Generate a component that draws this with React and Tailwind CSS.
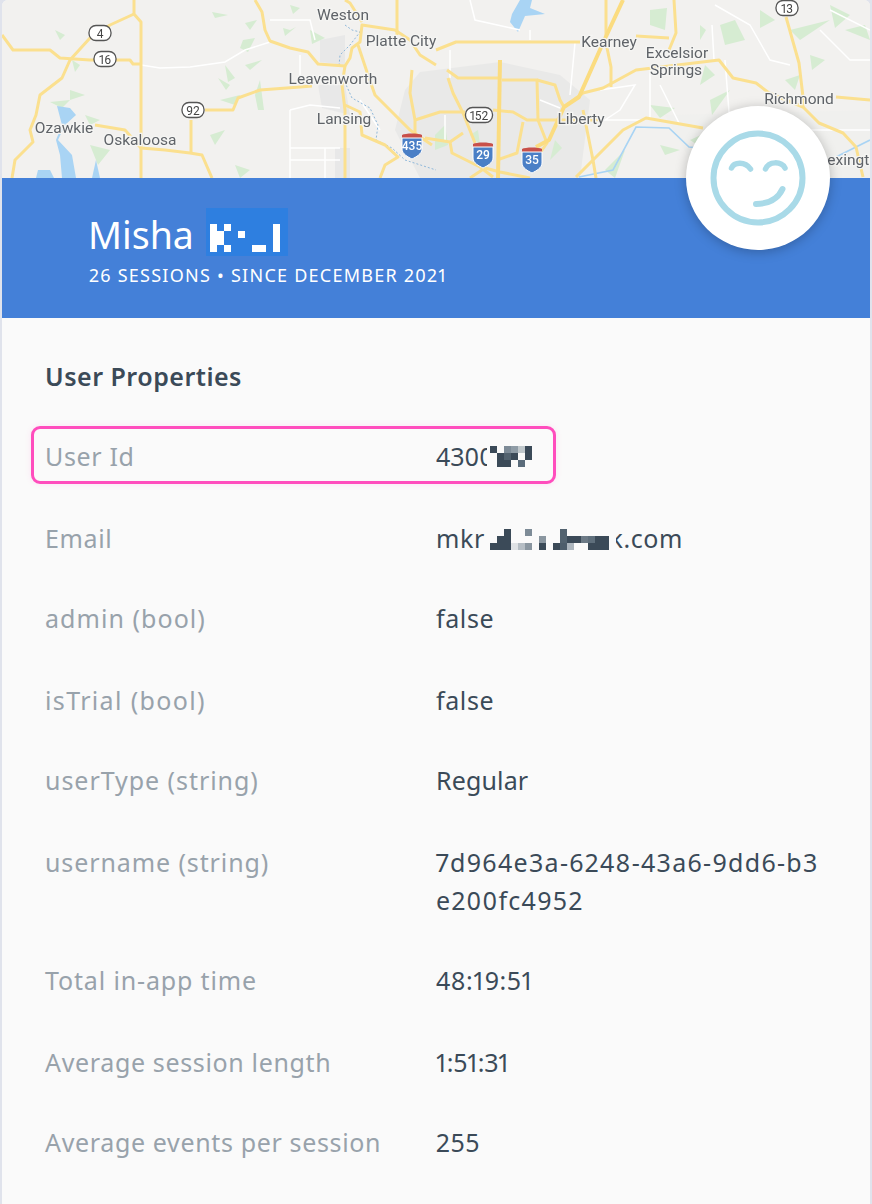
const yellow = [
  "134,0 134,14 141,22 141,180",
  "134,14 110,25 90,38 70,60 62,78 40,95 36,115 30,130 33,142 15,160 12,178",
  "2,35 13,50 50,50 60,58 90,60 130,60 133,64 141,64",
  "95,125 125,130 141,148 165,150 190,153 202,155 212,178",
  "205,110 233,110 238,98 260,90 300,87 312,86",
  "191,120 191,153",
  "255,0 262,12 265,30 270,41 290,48 308,52 318,64 345,66 350,58 352,48 360,42 362,25 395,30 410,40 420,55 436,65",
  "345,0 350,3 362,22",
  "397,0 397,35",
  "358,45 368,75 375,95 395,115 410,130 432,145",
  "345,66 342,85 345,110 345,178",
  "345,105 360,112 362,135 385,145 398,157 385,165 380,178",
  "412,70 410,93 415,120 415,133",
  "415,120 440,112 465,112",
  "493,110 513,112 527,120 567,120 600,120",
  "502,80 537,80 538,120 547,143 540,153 535,165",
  "447,70 458,78 498,78",
  "448,78 453,93 463,113 475,143",
  "425,138 450,142 463,133",
  "450,142 452,153 480,167 493,177",
  "523,122 517,153 497,160",
  "537,80 555,85 560,100 564,107",
  "436,50 456,42 580,42",
  "636,36 669,38",
  "674,0 676,33 669,50",
  "606,0 606,43 611,67 611,87",
  "564,107 583,93 603,88 636,70 719,60 733,78 756,83 769,93 803,107 819,123 843,133 856,147 863,177",
  "836,97 870,100",
  "786,17 799,63 803,97 803,107",
  "576,177 603,150 623,130 646,118 703,128",
  "583,110 593,160 596,178",
  "470,178 485,168 500,172 530,178",
];
const yellowThick = ["623,0 603,43 579,97 564,107 549,140 536,147", "500,60 498,178"];
const white = [
  "141,65 160,68 190,67 225,62 245,50 270,42",
  "270,20 310,20 315,40", "300,55 300,85", "290,110 310,105 340,108", "290,110 290,178",
  "290,148 340,148", "290,160 340,160", "325,148 325,178", "520,30 475,20 470,0",
  "540,100 560,108", "600,90 635,85 620,110 605,120 640,120", "660,85 680,125", "650,70 650,120",
  "715,5 750,25 770,60 790,65", "712,25 714,60", "725,60 730,125", "830,10 870,30", "820,30 850,60 870,60", "810,130 870,130",
  "530,30 530,40", "450,50 450,78", "575,43 570,95", "380,130 360,100", "445,140 445,115",
];
const greens = [
  "212,12 228,15 215,18", "245,23 257,20 250,30", "290,30 296,27 285,36 283,28", "243,40 255,38 248,52 240,48",
  "218,78 230,85 226,90", "225,65 235,78 228,82", "255,95 260,80 264,110 258,110", "220,100 240,95 235,105", "245,65 262,60 250,70",
  "80,65 75,72 72,60", "70,90 85,95 70,100", "50,102 70,100 62,108", "85,115 100,120 90,125", "65,35 55,30 60,40",
  "90,145 110,150 98,165", "210,135 225,130 215,145", "235,165 250,170 240,178", "290,5 300,8 293,14", "310,30 325,38 312,44",
  "650,10 667,8 665,30 650,25", "700,25 706,30 700,40", "720,25 735,20 745,40 725,45", "760,10 775,20 760,28", "790,30 830,20 800,40",
  "705,65 715,75 700,85", "710,100 730,90 712,115", "830,5 850,15 835,28", "785,80 800,75 795,90", "650,105 675,108 660,118",
  "435,135 445,125 448,145 435,150", "555,140 562,148 550,160", "470,135 478,130 480,145", "605,170 625,150 615,178", "660,145 680,150 665,155",
  "810,55 825,60 812,70", "845,30 865,25 870,40", "690,140 712,130 705,150",
];
const blueDots = ["345,25 352,30 360,32 350,45 340,55 339,66", "343,78 352,98 370,108 378,125 376,140 392,148 405,160 436,170"];
function Shield({ x, y, n }) {
  return (
    <g transform={`translate(${x} ${y})`}>
      <path d="M-10,-9 C-7,-11 7,-11 10,-9 L10,-6 L-10,-6 Z" fill="#c8504a" />
      <path d="M-10,-6 L10,-6 L10,5 C10,10 4,13 0,15 C-4,13 -10,10 -10,5 Z" fill="#4a7fc6" stroke="#fff" strokeWidth="1" />
      <text x="0" y="6" textAnchor="middle" fontSize="12" fill="#fff" fontWeight="500" fontFamily="Roboto, sans-serif">{n}</text>
    </g>
  );
}
function Badge({ x, y, n, w = 22 }) {
  return (
    <g>
      <rect x={x - w / 2} y={y - 7.5} width={w} height={15} rx="7" fill="#fff" stroke="#555" strokeWidth="1.3" />
      <text x={x} y={y + 4.5} textAnchor="middle" fontSize="12" fill="#444" fontFamily="Roboto, sans-serif">{n}</text>
    </g>
  );
}
const labels = [
  ["Weston", 343, 20, "middle"], ["Platte City", 401, 46, "middle"], ["Leavenworth", 333, 84, "middle"], ["Lansing", 344, 124, "middle"], ["Ozawkie", 64, 133, "middle"], ["Oskaloosa", 140, 145, "middle"],
  ["Kearney", 609, 47, "middle"], ["Excelsior", 677, 58, "middle"], ["Springs", 676, 75, "middle"], ["Richmond", 799, 104, "middle"], ["Liberty", 581, 124, "middle"], ["Lexington", 819, 165, "start"],
];
function MapArt() {
  return (
    <svg viewBox="0 0 868 178" className="block w-full h-[178px] blur-[0.5px]">
      <g transform="translate(-2 0)">
        <rect x="0" y="0" width="872" height="178" fill="#f2f1ef" />
        <polygon points="420,72 500,62 560,75 590,100 580,178 420,178 395,130 405,90" fill="#e9e9e8" />
        <polygon points="320,40 345,35 345,65 320,62" fill="#e8e8e8" />
        <polygon points="318,85 345,85 350,115 322,108" fill="#e8e8e8" />
        <polygon points="335,148 350,148 350,178 335,178" fill="#e8e8e8" />
        <polygon points="665,115 880,110 880,178 700,178" fill="#f0f0ee" />
        {greens.map((p) => <polygon key={p} points={p} fill="#d6ecd2" />)}
        <polygon points="57,106 70,108 76,115 65,125 58,140 72,155 76,178 62,178 60,155 56,140 62,125" fill="#a9d4f4" />
        <polygon points="38,170 50,170 54,178 36,178" fill="#a9d4f4" />
        <polygon points="96,160 100,178 92,178" fill="#a9d4f4" />
        <polygon points="520,0 532,0 530,8 545,14 525,16 518,32 510,22 512,14" fill="#a9d4f4" />
        <polyline points="579,177 613,170 636,127 669,128 689,147 700,148" fill="none" stroke="#a9d4f4" strokeWidth="1.6" />
        <polyline points="820,165 850,150 870,140" fill="none" stroke="#a9d4f4" strokeWidth="1.6" />
        {white.map((p) => <polyline key={p} points={p} fill="none" stroke="#fff" strokeWidth="1.5" />)}
        {blueDots.map((p) => <polyline key={p} points={p} fill="none" stroke="#8fb8da" strokeWidth="1" strokeDasharray="2 2" />)}
        {yellow.map((p) => <polyline key={p} points={p} fill="none" stroke="#fbe08f" strokeWidth="3" strokeLinejoin="round" />)}
        {yellowThick.map((p) => <polyline key={p} points={p} fill="none" stroke="#fbdc80" strokeWidth="4" strokeLinejoin="round" />)}
        <Badge x={100} y={33} n="4" />
        <Badge x={105} y={59} n="16" />
        <Badge x={193} y={110} n="92" />
        <Badge x={479} y={115} n="152" w={27} />
        <Badge x={787} y={8} n="13" />
        <Shield x={412} y={144} n="435" />
        <Shield x={483} y={153} n="29" />
        <Shield x={532} y={158} n="35" />
        {labels.map(([t, x, y, a]) => (
          <text key={t} x={x} y={y} textAnchor={a} fontSize="15.5" fill="#5f6368" stroke="#f5f5f3" strokeWidth="2.5" paintOrder="stroke" fontFamily="Roboto, sans-serif">{t}</text>
        ))}
      </g>
    </svg>
  );
}
function Smiley() {
  return (
    <svg width="100" height="100" viewBox="0 0 100 100" fill="none" stroke="#a9dae8" strokeWidth="6" strokeLinecap="round">
      <circle cx="50" cy="50" r="44.5" />
      <path d="M23.5 40 C26 34 37 33 42.5 41" strokeWidth="5.5" />
      <path d="M57.5 41 C61 33 73 33 77 40" strokeWidth="5.5" />
      <path d="M48 76 C60 76 70 71 74.500 61" />
    </svg>
  );
}
const D = "#3b4a58";
const idPx = [
  [0, 0, 7, D], [14, 0, 7, "#7d8b97"], [21, 0, 7, "#8f9ca6"], [28, 0, 7, "#c0c8cc"], [35, 0, 7, D],
  [7, 7, 7, D], [14, 7, 7, "#52626f"], [21, 7, 7, D], [35, 7, 7, D],
  [7, 14, 14, D], [28, 14, 7, "#5a6b7a"],
];
const mailPx = [
  [14, 0, 7, D], [35, 0, 7, "#7d8b97"], [70, 0, 7, "#52626f"],
  [7, 7, 14, D], [49, 7, 7, "#8a96a0"], [70, 7, 7, "#52626f"], [77, 7, 14, D], [91, 7, 7, "#6c7a86"], [98, 7, 7, "#5f6f7c"], [105, 7, 14, D],
  [0, 14, 21, D], [21, 14, 7, "#dfe2e5"], [28, 14, 7, "#b5bdc4"], [35, 14, 7, "#8a96a0"], [49, 14, 7, D], [63, 14, 7, D], [70, 14, 7, "#4d5d6b"], [77, 14, 7, "#adb6be"], [98, 14, 21, D],
];
function Pixels({ cells, w, className }) {
  return (
    <svg width={w} height="21" viewBox={`0 0 ${w} 21`} shapeRendering="crispEdges" className={className}>
      {cells.map(([x, y, cw, c]) => <rect key={`${x}-${y}`} x={x} y={y} width={cw} height="7" fill={c} />)}
    </svg>
  );
}
const rows = [
  ["Email", "tracking-[0.65px]", "tracking-[0.6px]", <span className="flex items-center">
    <span className="w-[54px] shrink-0">mkr</span>
    <Pixels cells={mailPx} w={119} className="mt-[2px] shrink-0" />
    <span className="ml-[7px] flex w-[67px] shrink-0 justify-end overflow-hidden whitespace-nowrap">k.com</span>
  </span>],
  ["admin (bool)", "tracking-[1.05px]", "tracking-[0.6px]", "false"],
  ["isTrial (bool)", "tracking-[1.35px]", "tracking-[0.6px]", "false"],
  ["userType (string)", "tracking-[0.95px]", "tracking-[0.15px]", "Regular"],
  ["username (string)", "tracking-[0.9px]", "tracking-[1.3px]", <>7d964e3a-6248-43a6-9dd6-b3<br />e200fc4952</>],
  ["Total in-app time", "tracking-[0.85px]", "tracking-[0.5px]", "48:19:51"],
  ["Average session length", "tracking-[0.65px]", "tracking-[-0.3px]", "1:51:31"],
  ["Average events per session", "tracking-[0.65px]", "tracking-[0.5px]", "255"],
];
export default function App() {
  return (
    <div className="h-[1204px] w-[872px] overflow-hidden bg-[#e0e3ec] px-[2px] font-['Noto_Sans',sans-serif] proportional-nums">
      <div className="overflow-hidden rounded-t-[6px] h-full bg-[#fafafa]">
        <MapArt />
        <div className="relative h-[140px] bg-[#4480d8] pl-[87px] pt-[30px] text-white">
          <div className="flex items-start h-[48px]">
            <span className="w-[117px] -ml-[1px] mr-[1px] mt-[3px] text-[37.5px] leading-[48px]">Misha</span>
            <svg width="82" height="48" viewBox="0 0 82 48" shapeRendering="crispEdges" className="bg-[#2e7fe0]">
              <g fill="#fff" transform="translate(4 16) scale(7)">
                <rect x="0" y="0" width="1" height="4" /><rect x="1" y="1" width="1" height="2" /><rect x="2" y="0" width="1" height="1" />
                <rect x="2" y="3" width="1" height="1" /><rect x="4" y="1" width="1" height="1" /><rect x="6" y="3" width="2" height="1" /><rect x="9" y="0" width="1" height="4" />
              </g>
            </svg>
          </div>
          <div className="mt-[5px] text-[18px] leading-[28px] tracking-[1.25px] whitespace-nowrap">26 SESSIONS • SINCE DECEMBER 2021</div>
          <div className="absolute right-[40px] top-[-72px] flex h-[144px] w-[144px] items-center justify-center rounded-full bg-white shadow-[0_2px_12px_rgba(0,0,0,0.25)]">
            <Smiley />
          </div>
        </div>
        <div className="pl-[43px] pr-[30px] pt-[39px] text-[25px] leading-[38px]">
          <div className="font-semibold tracking-[0.5px] text-[#3b4a58]">User Properties</div>
          <div className="mt-[42px] flex flex-col">
            <div className="relative mb-[44px] grid grid-cols-[391px_1fr]">
              <div className="absolute left-[-14px] top-[-11px] h-[58px] w-[525px] rounded-[9px] border-[3px] border-[#ff4dbd] shadow-[0_0_6px_rgba(255,77,189,0.12)]" />
              <div className="tracking-[0.65px] text-[#98a2ab]">User Id</div>
              <div className="flex items-center text-[#3b4a58]">
                <span className="w-[51px] shrink-0 overflow-hidden whitespace-nowrap">4300</span>
                <Pixels cells={idPx} w={42} className="ml-[3px] mt-[1px] shrink-0" />
              </div>
            </div>
            {rows.map(([k, kt, t, v]) => (
              <div key={k} className="even:mb-[42px] odd:mb-[44px] grid grid-cols-[391px_1fr]">
                <div className={`text-[#98a2ab] ${kt}`}>{k}</div>
                <div className={`text-[#3b4a58] ${t}`}>{v}</div>
              </div>
            ))}
          </div>
        </div>
      </div>
    </div>
  );
}
